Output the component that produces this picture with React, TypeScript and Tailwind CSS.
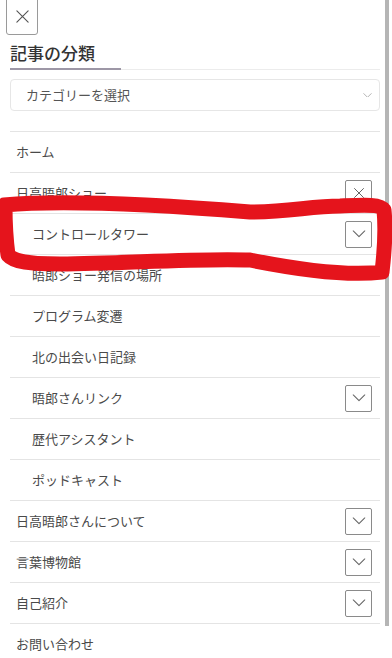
import React from "react";

type Item = { label: string; level: 1 | 2; toggle?: "x" | "down" };

const items: Item[] = [
  { label: "ホーム", level: 1 },
  { label: "日高晤郎ショー", level: 1, toggle: "x" },
  { label: "コントロールタワー", level: 2, toggle: "down" },
  { label: "晤郎ショー発信の場所", level: 2 },
  { label: "プログラム変遷", level: 2 },
  { label: "北の出会い日記録", level: 2 },
  { label: "晤郎さんリンク", level: 2, toggle: "down" },
  { label: "歴代アシスタント", level: 2 },
  { label: "ポッドキャスト", level: 2 },
  { label: "日高晤郎さんについて", level: 1, toggle: "down" },
  { label: "言葉博物館", level: 1, toggle: "down" },
  { label: "自己紹介", level: 1, toggle: "down" },
  { label: "お問い合わせ", level: 1 },
];

function XIcon({ size = 16 }: { size?: number }) {
  return (
    <svg width={size} height={size} viewBox="0 0 16 16" fill="none" stroke="#555" strokeWidth="1.2" strokeLinecap="round">
      <path d="M2 2 L14 14 M14 2 L2 14" />
    </svg>
  );
}

function Chevron({ w = 14, color = "#666", sw = 1.1 }: { w?: number; color?: string; sw?: number }) {
  return (
    <svg width={w} height={w * 0.55} viewBox="0 0 14 8" fill="none" stroke={color} strokeWidth={sw} strokeLinecap="round" strokeLinejoin="round">
      <path d="M1 1 L7 7 L13 1" />
    </svg>
  );
}

export default function App() {
  return (
    <div
      className="relative w-[392px] h-[658px] overflow-hidden bg-white text-[#444]"
      style={{ fontFamily: '"Noto Sans CJK JP", "Noto Sans", sans-serif' }}
    >
      {/* close button */}
      <div className="ml-[6px] mt-[-2px] w-[32px] h-[37px] border border-[#9a9a9a] rounded-b-[3px] flex items-center justify-center">
        <XIcon size={15} />
      </div>

      <div className="mx-[10px] w-[370px]">
        <h2 className="mt-[6px] text-[17px] leading-[24px] font-medium text-[#333]">記事の分類</h2>
        <div className="mt-[3px] flex items-end">
          <div className="w-[111px] h-[2px] bg-[#9d97a6]" />
          <div className="flex-1 h-[1px] bg-[#ececec]" />
        </div>

        <div className="mt-[9px] h-[32px] rounded-[4px] border border-[#e6e6e6] flex items-center justify-between pl-[15px] pr-[7px]">
          <span className="text-[13px] text-[#555]">カテゴリーを選択</span>
          <Chevron w={9} color="#999" sw={1.2} />
        </div>

        <ul className="mt-[20px] border-t border-[#e4e4e4]">
          {items.map((it) => (
            <li
              key={it.label}
              className={`h-[41px] border-b border-[#e4e4e4] flex items-center justify-between pr-[8px] ${
                it.level === 1 ? "pl-[6px]" : "pl-[22px]"
              }`}
            >
              <span className="text-[13px] text-[#4a4a4a]">{it.label}</span>
              {it.toggle && (
                <span className="w-[27px] h-[27px] border border-[#8a8a8a] rounded-[2px] flex items-center justify-center">
                  {it.toggle === "x" ? <XIcon size={12} /> : <Chevron w={14} color="#666" sw={1.1} />}
                </span>
              )}
            </li>
          ))}
        </ul>
      </div>

      {/* scrollbar thumb */}
      <div className="absolute left-[385px] top-0 w-[4px] h-[626px] bg-[#b5b5b5]" />

      {/* red marker annotation */}
      <svg className="absolute left-0 top-0 pointer-events-none" width="392" height="658" viewBox="0 0 392 658">
        <path
          d="M4 205 C60 200 150 204 250 212 C290 212 310 206 340 206 C365 205 380 204 384 210 C386 230 384 255 382 272 C350 276 300 270 250 260 C200 258 130 263 60 264 C30 264 14 262 8 255 C6 240 5 220 5 206"
          fill="none"
          stroke="#e5141c"
          strokeWidth="15"
          strokeLinecap="round"
          strokeLinejoin="round"
        />
      </svg>
    </div>
  );
}
